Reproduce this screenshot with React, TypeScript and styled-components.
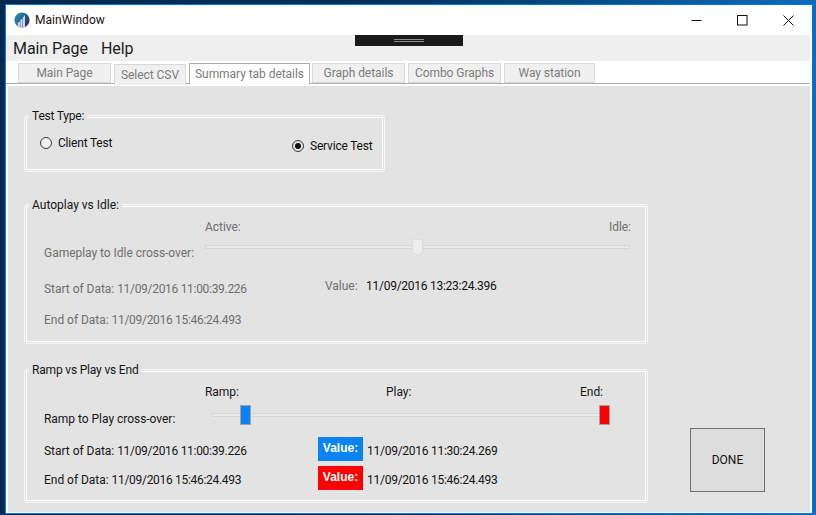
import React from "react";
import styled, { createGlobalStyle } from "styled-components";

const Global = createGlobalStyle`
  html, body { margin: 0; padding: 0; height: 100%; overflow: hidden; }
  body {
    background: linear-gradient(90deg, #012a50 0%, #01305c 45%, #03508f 75%, #0a6cbd 100%);
    font-family: Roboto, "Open Sans", sans-serif;
    font-size: 12px;
    letter-spacing: -0.03px;
    color: #111;
  }
`;

const Window = styled.div`
  margin: 4px 0 0 5px;
  width: 808px;
  height: 510px;
  box-sizing: border-box;
  border: 1px solid #0a78d2;
  background: #fff;
  display: flex;
  flex-direction: column;
  padding: 0 2px 1px 0;
`;

const TitleBar = styled.div`
  height: 30px;
  flex: none;
  display: flex;
  align-items: center;
  padding-left: 8px;
  margin-right: -1px;
  font-size: 12px;
  letter-spacing: 0.05px;
  color: #1a1010;
`;

const TitleText = styled.span`
  flex: 1;
  margin-left: 5px;
`;

const WinButton = styled.div`
  width: 46px;
  height: 30px;
  display: flex;
  align-items: center;
  justify-content: center;
`;

const MenuBar = styled.div`
  height: 26px;
  flex: none;
  background: #efefef;
  display: flex;
  align-items: center;
  gap: 13px;
  padding-left: 7px;
  font-size: 16px;
  letter-spacing: -0.07px;
  position: relative;
  color: #1d1d1d;
`;

const Grip = styled.div`
  position: absolute;
  left: 349px;
  top: 0;
  width: 108px;
  height: 11px;
  background: #1a1a1a;
  display: flex;
  justify-content: center;
  padding-top: 4px;
  box-sizing: border-box;
`;

const GripLines = styled.div`
  width: 30px;
  height: 3px;
  border-top: 1px solid #8a8a8a;
  border-bottom: 1px solid #8a8a8a;
  box-sizing: border-box;
`;

const TabStrip = styled.div`
  height: 23px;
  flex: none;
  box-sizing: border-box;
  display: flex;
  align-items: flex-start;
  padding: 2px 0 0 12px;
  border-bottom: 1px solid #acacac;
`;

const Tab = styled.div<{ $w: number; $gap: number; $active?: boolean; $low?: boolean }>`
  width: ${(p) => p.$w}px;
  margin-right: ${(p) => p.$gap}px;
  margin-top: ${(p) => (p.$low ? 1 : 0)}px;
  height: ${(p) => (p.$active || p.$low ? 21 : 20)}px;
  box-sizing: border-box;
  flex: none;
  display: flex;
  align-items: center;
  justify-content: center;
  font-size: 12px;
  letter-spacing: -0.05px;
  color: #7c7c7c;
  background: ${(p) => (p.$active ? "#fff" : "#f0f0f0")};
  border: 1px solid ${(p) => (p.$active ? "#acacac" : "#d9d9d9")};
  border-bottom-width: ${(p) => (p.$active || p.$low ? 0 : 1)}px;
  position: relative;
  z-index: ${(p) => (p.$active || p.$low ? 1 : 0)};
`;

const Panel = styled.div`
  flex: 1;
  margin: 2px 0 0 2px;
  background: #e3e3e3;
  display: flex;
  padding: 29px 0 0 16px;
  min-height: 0;
`;

const Column = styled.div`
  width: 624px;
  flex: none;
  display: flex;
  flex-direction: column;
`;

const Group = styled.section<{ $w: number; $h: number; $top: number }>`
  width: ${(p) => p.$w}px;
  height: ${(p) => p.$h}px;
  margin-top: ${(p) => p.$top}px;
  box-sizing: border-box;
  flex: none;
  border: 1px solid #f5f8fa;
  border-radius: 3px;
  box-shadow: inset 0 0 0 1px #e3e3e3, inset 0 0 0 2px #fff;
  padding: 0 17px 0 19px;
`;

const Legend = styled.div<{ $ls?: number }>`
  width: fit-content;
  margin: -7px 0 0 -15px;
  padding: 0 3px;
  height: 16px;
  line-height: 14px;
  letter-spacing: ${(p) => p.$ls ?? 0}px;
  background: #e3e3e3;
  color: #161616;
`;

const RadioGrid = styled.div`
  display: grid;
  grid-template-columns: 252px auto;
  margin-left: -4px;
`;

const RadioLabel = styled.label<{ $top: number }>`
  display: flex;
  align-items: center;
  gap: 6px;
  margin-top: ${(p) => p.$top}px;
  height: 16px;
  white-space: nowrap;
  letter-spacing: -0.2px;
  color: #111;
`;

const RadioDot = styled.span<{ $on?: boolean }>`
  width: 12px;
  height: 12px;
  box-sizing: border-box;
  border-radius: 50%;
  border: 1px solid #3a3a3a;
  background: ${(p) => (p.$on ? "#e3e3e3" : "#f2f2f2")};
  display: flex;
  align-items: center;
  justify-content: center;
  &::after {
    content: "";
    display: ${(p) => (p.$on ? "block" : "none")};
    width: 6px;
    height: 6px;
    border-radius: 50%;
    background: #111;
  }
`;

const SliderRow = styled.div<{ $top: number }>`
  display: flex;
  margin-top: ${(p) => p.$top}px;
`;

const SliderCaption = styled.div<{ $w: number; $top: number; $dim?: boolean }>`
  width: ${(p) => p.$w}px;
  flex: none;
  padding-top: ${(p) => p.$top}px;
  color: ${(p) => (p.$dim ? "#6f6f6f" : "#161616")};
`;

const SliderBlock = styled.div<{ $w: number }>`
  width: ${(p) => p.$w}px;
  flex: none;
`;

const MarkRow = styled.div`
  display: flex;
  justify-content: space-between;
  height: 16px;
  line-height: 16px;
  color: #6f6f6f;
`;

const MarkGrid = styled.div`
  display: grid;
  grid-template-columns: 181px 194px auto;
  height: 16px;
  line-height: 16px;
  color: #161616;
`;

const Track = styled.div<{ $w: number; $top: number; $left?: number }>`
  position: relative;
  width: ${(p) => p.$w}px;
  height: 4px;
  margin-top: ${(p) => p.$top}px;
  margin-left: ${(p) => p.$left ?? 0}px;
  box-sizing: border-box;
  background: #e7eaea;
  border: 1px solid #d6d6d6;
`;

const FlatThumb = styled.div<{ $left: number; $color: string }>`
  position: absolute;
  left: ${(p) => p.$left}px;
  top: -9px;
  width: 11px;
  height: 20px;
  box-sizing: border-box;
  background: ${(p) => p.$color};
  border: 1px solid #a3a3a3;
`;

const PointThumb = styled.svg`
  position: absolute;
  left: 206px;
  top: -7px;
`;

const InfoRow = styled.div<{ $top: number }>`
  display: flex;
  align-items: center;
  margin-top: ${(p) => p.$top}px;
  height: 16px;
`;

const InfoText = styled.div<{ $w: number; $dim?: boolean; $drop?: number }>`
  width: ${(p) => p.$w}px;
  flex: none;
  padding-top: ${(p) => p.$drop ?? 0}px;
  color: ${(p) => (p.$dim ? "#6f6f6f" : "#161616")};
`;

const DateText = styled.span`
  letter-spacing: -0.3px;
`;

const ValueLabel = styled.span`
  color: #6f6f6f;
  width: 41px;
  flex: none;
  position: relative;
  top: -3px;
`;

const ValueText = styled.span<{ $raise?: number }>`
  color: #111;
  letter-spacing: -0.26px;
  position: relative;
  top: ${(p) => -(p.$raise ?? 0)}px;
`;

const Badge = styled.div<{ $color: string }>`
  width: 45px;
  height: 24px;
  flex: none;
  box-sizing: border-box;
  background: ${(p) => p.$color};
  color: #fff;
  font-family: "Liberation Sans", Arial, sans-serif;
  font-weight: bold;
  font-size: 12px;
  letter-spacing: 0;
  display: flex;
  align-items: center;
  justify-content: center;
  padding-bottom: 3px;
  margin-right: 4px;
`;

const BadgeRows = styled.div`
  display: grid;
  grid-template-columns: 274px auto 1fr;
  grid-auto-rows: 24px;
  row-gap: 5px;
  margin-top: 11px;
  align-items: center;
`;

const DoneColumn = styled.div`
  margin-left: 42px;
  flex: none;
  align-self: flex-end;
  margin-bottom: 20px;
`;

const DoneButton = styled.button`
  width: 75px;
  height: 64px;
  padding: 0;
  background: #dddddd;
  border: 1px solid #707070;
  font: inherit;
  color: #111;
  display: block;
`;

const Logo = () => (
  <svg width="16" height="16" viewBox="0 0 16 16">
    <defs>
      <linearGradient id="lg" x1="0" y1="0" x2="1" y2="0.6">
        <stop offset="0" stopColor="#2b8fa8" />
        <stop offset="0.5" stopColor="#23709c" />
        <stop offset="1" stopColor="#2b2f5e" />
      </linearGradient>
    </defs>
    <circle cx="8" cy="8" r="7.6" fill="url(#lg)" />
    <path d="M3.8 14V10.8L6 9.6V15ZM6.4 15.2V8.2L8.4 6.6V15.4ZM8.8 15.4V5.4L11 3V14.8Z" fill="#c9d4e8" />
  </svg>
);

const Minimize = () => (
  <svg width="11" height="11" viewBox="0 0 11 11">
    <path d="M0.5 5.5H10.5" stroke="#111" fill="none" />
  </svg>
);
const Maximize = () => (
  <svg width="11" height="11" viewBox="0 0 11 11">
    <rect x="0.5" y="0.5" width="9.5" height="9.5" stroke="#111" fill="none" />
  </svg>
);
const Close = () => (
  <svg width="11" height="11" viewBox="0 0 11 11">
    <path d="M0.5 0.5L10.5 10.5M10.5 0.5L0.5 10.5" stroke="#111" fill="none" />
  </svg>
);

export default function App() {
  return (
    <>
      <Global />
      <Window>
        <TitleBar>
          <Logo />
          <TitleText>MainWindow</TitleText>
          <WinButton><Minimize /></WinButton>
          <WinButton><Maximize /></WinButton>
          <WinButton><Close /></WinButton>
        </TitleBar>
        <MenuBar>
          <span>Main Page</span>
          <span>Help</span>
          <Grip><GripLines /></Grip>
        </MenuBar>
        <TabStrip>
          <Tab $w={93} $gap={3}>Main Page</Tab>
          <Tab $w={72} $gap={3} $low>Select CSV</Tab>
          <Tab $w={121} $gap={2} $active>Summary tab details</Tab>
          <Tab $w={93} $gap={3}>Graph details</Tab>
          <Tab $w={93} $gap={3}>Combo Graphs</Tab>
          <Tab $w={91} $gap={0}>Way station</Tab>
        </TabStrip>
        <Panel>
          <Column>
            <Group $w={361} $h={57} $top={0}>
              <Legend $ls={-0.2}>Test Type:</Legend>
              <RadioGrid>
                <RadioLabel $top={10}><RadioDot />Client Test</RadioLabel>
                <RadioLabel $top={13}><RadioDot $on />Service Test</RadioLabel>
              </RadioGrid>
            </Group>
            <Group $w={624} $h={140} $top={32}>
              <Legend>Autoplay vs Idle:</Legend>
              <SliderRow $top={5}>
                <SliderCaption $w={161} $top={27} $dim>Gameplay to Idle cross-over:</SliderCaption>
                <SliderBlock $w={426}>
                  <MarkRow><span>Active:</span><span>Idle:</span></MarkRow>
                  <Track $w={425} $top={10}>
                    <PointThumb width="11" height="18" viewBox="0 0 11 18">
                      <path d="M0.5 0.5H10.5V12L5.5 17L0.5 12Z" fill="#eeeeee" stroke="#dcdcdc" />
                    </PointThumb>
                  </Track>
                </SliderBlock>
              </SliderRow>
              <InfoRow $top={21}>
                <InfoText $w={281} $dim>Start of Data: <DateText>11/09/2016 11:00:39.226</DateText></InfoText>
                <ValueLabel>Value:</ValueLabel>
                <ValueText $raise={3}>11/09/2016 13:23:24.396</ValueText>
              </InfoRow>
              <InfoRow $top={15}>
                <InfoText $w={281} $dim>End of Data: <DateText>11/09/2016 15:46:24.493</DateText></InfoText>
              </InfoRow>
            </Group>
            <Group $w={624} $h={134} $top={25}>
              <Legend $ls={-0.18}>Ramp vs Play vs End</Legend>
              <SliderRow $top={5}>
                <SliderCaption $w={161} $top={28}>Ramp to Play cross-over:</SliderCaption>
                <SliderBlock $w={405}>
                  <MarkGrid>
                    <span>Ramp:</span>
                    <span>Play:</span>
                    <span>End:</span>
                  </MarkGrid>
                  <Track $w={389} $top={13} $left={6}>
                    <FlatThumb $left={28} $color="#0a84f5" />
                    <FlatThumb $left={387} $color="#ff0000" />
                  </Track>
                </SliderBlock>
              </SliderRow>
              <BadgeRows>
                <InfoText $w={274} $drop={4}>Start of Data: <DateText>11/09/2016 11:00:39.226</DateText></InfoText>
                <Badge $color="#0a84f5">Value:</Badge>
                <ValueText $raise={-2}>11/09/2016 11:30:24.269</ValueText>
                <InfoText $w={274} $drop={4}>End of Data: <DateText>11/09/2016 15:46:24.493</DateText></InfoText>
                <Badge $color="#ff0000">Value:</Badge>
                <ValueText $raise={-2}>11/09/2016 15:46:24.493</ValueText>
              </BadgeRows>
            </Group>
          </Column>
          <DoneColumn>
            <DoneButton>DONE</DoneButton>
          </DoneColumn>
        </Panel>
      </Window>
    </>
  );
}
